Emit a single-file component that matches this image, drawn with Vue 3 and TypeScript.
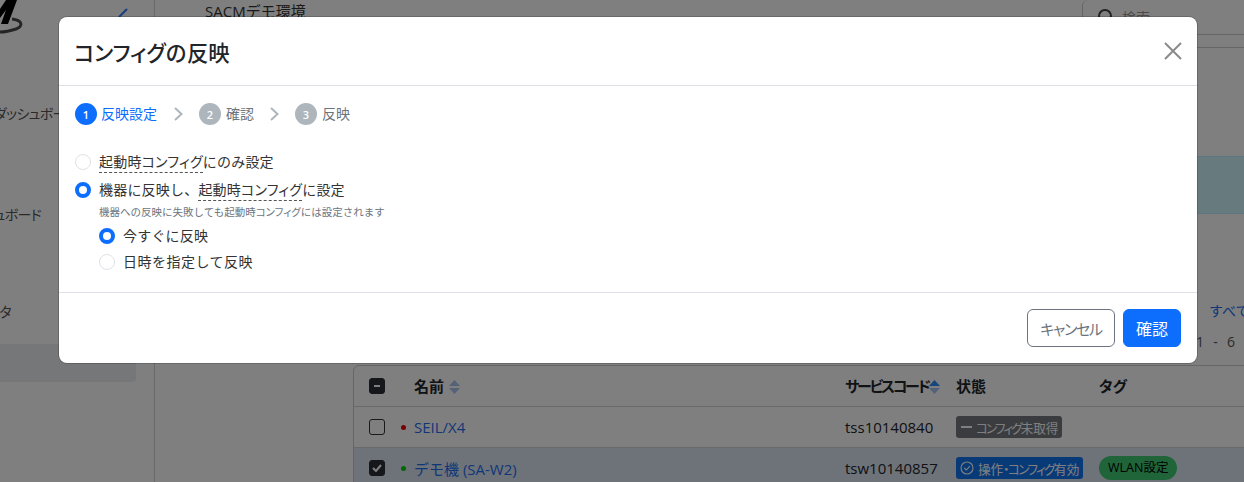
<script setup lang="ts">
import { ref } from 'vue'

const mode = ref('apply')
const timing = ref('now')
const steps = [
  { n: 1, label: '反映設定', active: true },
  { n: 2, label: '確認', active: false },
  { n: 3, label: '反映', active: false },
]
</script>

<template>
  <div class="page">
    <aside class="sidebar">
      <svg class="logo" width="154" height="47" viewBox="0 0 154 47">
        <path d="M12 19 C22 20 24 26 16 29 C10 31 4 32 0 32" fill="none" stroke="#4a4a4a" stroke-width="3" />
        <path d="M0 9 L6 0 H17 L8 24 H1 L6 10 L0 18 Z" fill="#000" />
        <path d="M127 9 L119 17" stroke="#2a7bff" stroke-width="2" fill="none" />
      </svg>
      <div class="nav nav-a">ダッシュボード</div>
      <div class="nav nav-b">ダッシュボード</div>
      <div class="nav nav-c">データ</div>
      <div class="nav-selected"></div>
    </aside>

    <main class="main">
      <header class="topbar">
        <span class="env">SACMデモ環境</span>
        <div class="search">
          <svg width="18" height="18" viewBox="0 0 18 18" fill="none" stroke="#444" stroke-width="2">
            <circle cx="8" cy="8" r="6" />
            <path d="M13 13 L17 17" />
          </svg>
          <span>検索</span>
        </div>
      </header>
      <div class="alert"></div>
      <a class="select-all">すべて選択</a>
      <div class="pager">1 - 6 / 6</div>
      <div class="table">
        <div class="row head">
          <span class="check dark"><i class="minus"></i></span>
          <span class="dot none"></span>
          <span class="c-name">名前
            <svg class="sort" width="11" height="14" viewBox="0 0 11 14">
              <path d="M5.5 0 L11 6 H0 Z" fill="#a9c4f0" />
              <path d="M5.5 14 L11 8 H0 Z" fill="#a9c4f0" />
            </svg>
          </span>
          <span class="c-code"><span class="tight">サービスコード</span>
            <svg class="sort" width="11" height="14" viewBox="0 0 11 14">
              <path d="M5.5 0 L11 6 H0 Z" fill="#2f8dff" />
              <path d="M5.5 14 L11 8 H0 Z" fill="#a9c4f0" />
            </svg>
          </span>
          <span class="c-state">状態</span>
          <span class="c-tag">タグ</span>
        </div>
        <div class="row">
          <span class="check"></span>
          <span class="dot red"></span>
          <a class="c-name link">SEIL/X4</a>
          <span class="c-code normal">tss10140840</span>
          <span class="c-state"><span class="badge gray"><i class="dash"></i><span><span class="tight">コンフィグ</span>未取得</span></span></span>
          <span class="c-tag"></span>
        </div>
        <div class="row selected">
          <span class="check dark">
            <svg width="10" height="8" viewBox="0 0 10 8" fill="none" stroke="#fff" stroke-width="2"><path d="M1 4 L4 7 L9 1" /></svg>
          </span>
          <span class="dot green"></span>
          <a class="c-name link">デモ機 (SA-W2)</a>
          <span class="c-code normal">tsw10140857</span>
          <span class="c-state">
            <span class="badge blue">
              <svg width="14" height="14" viewBox="0 0 14 14" fill="none" stroke="currentColor" stroke-width="1.1">
                <circle cx="7" cy="7" r="6" /><path d="M4.2 7 L6.3 9 L9.8 5.2" />
              </svg>
              <span>操作<span class="tight">・コンフィグ</span>有効</span>
            </span>
          </span>
          <span class="c-tag"><span class="pill">WLAN設定</span></span>
        </div>
      </div>
    </main>

    <div class="backdrop"></div>

    <section class="modal">
      <header class="modal-head">
        <h2><span class="kt">コンフィグ</span>の反映</h2>
        <svg class="close" width="18" height="18" viewBox="0 0 18 18" fill="none" stroke="#8a8a8a" stroke-width="2">
          <path d="M1 1 L17 17 M17 1 L1 17" />
        </svg>
      </header>

      <div class="modal-body">
        <ol class="steps">
          <template v-for="(s, i) in steps" :key="s.n">
            <li class="step" :class="{ active: s.active }">
              <span class="num">{{ s.n }}</span>
              <span class="step-label">{{ s.label }}</span>
            </li>
            <svg v-if="i < steps.length - 1" class="chev" width="9" height="14" viewBox="0 0 9 14" fill="none" stroke="#adb5bd" stroke-width="2">
              <path d="M1 1 L7.5 7 L1 13" />
            </svg>
          </template>
        </ol>

        <label class="radio r1">
          <input v-model="mode" type="radio" value="startup" />
          <span class="rtext"><span class="term kt">起動時コンフィグ</span>にのみ設定</span>
        </label>
        <label class="radio r2">
          <input v-model="mode" type="radio" value="apply" />
          <span class="rtext">機器に反映し、<span class="term kt">起動時コンフィグ</span>に設定</span>
        </label>
        <p class="hint">機器への反映に失敗しても起動時<span class="kt">コンフィグ</span>には設定されます</p>
        <div class="sub">
          <label class="radio">
            <input v-model="timing" type="radio" value="now" />
            <span class="rtext">今すぐに反映</span>
          </label>
          <label class="radio">
            <input v-model="timing" type="radio" value="later" />
            <span class="rtext wide">日時を指定して反映</span>
          </label>
        </div>
      </div>

      <footer class="modal-foot">
        <button class="btn cancel" type="button">キャンセル</button>
        <button class="btn ok" type="button">確認</button>
      </footer>
    </section>
  </div>
</template>

<style>
html, body { margin: 0; background: #fff; }
</style>

<style scoped>
.page {
  position: relative;
  display: flex;
  width: 1244px;
  height: 482px;
  overflow: hidden;
  background: #fff;
  color: #212529;
  font-family: "Open Sans", "Noto Sans CJK JP", sans-serif;
  font-size: 14px;
}
.kt { font-feature-settings: "palt"; }
.tight { font-feature-settings: "palt"; letter-spacing: -1.6px; }
.head .tight { letter-spacing: -2.2px; }
.sidebar {
  width: 154px;
  flex: none;
  border-right: 1px solid #d5d5d5;
  overflow: hidden;
  color: #555;
  font-feature-settings: "palt";
}
.logo { display: block; }
.nav { white-space: nowrap; line-height: 20px; letter-spacing: -0.7px; }
.nav-a { margin: 57px 0 0 -6px; }
.nav-b { margin: 81px 0 0 -41px; }
.nav-c { margin: 77px 0 0 -26px; }
.nav-selected {
  width: 136px;
  height: 38px;
  margin-top: 22px;
  background: #eceef3;
  border-radius: 0 4px 4px 0;
}
.main { flex: 1; min-width: 0; overflow: hidden; }
.topbar {
  display: flex;
  justify-content: space-between;
  height: 47px;
  box-sizing: content-box;
  border-bottom: 1px solid #ccc;
}
.env {
  margin: 1px 0 0 50px;
  font-size: 15px;
  line-height: 20px;
  color: #333;
}
.search {
  display: flex;
  align-items: center;
  gap: 7px;
  width: 162px;
  height: 35px;
  padding-left: 14px;
  border-left: 1px solid #ccc;
  border-bottom: 1px solid #ccc;
  border-radius: 6px 0 0 0;
  color: #999;
  box-sizing: border-box;
}
.alert {
  height: 56px;
  margin: 108px 0 0 0;
  background: #cff4fc;
  border-top: 1px solid #b6effb;
  border-bottom: 1px solid #b6effb;
  box-sizing: content-box;
}
.select-all {
  display: block;
  margin: 87px 0 0 1054px;
  color: #1f6fef;
  line-height: 20px;
  white-space: nowrap;
}
.pager {
  margin: 11px 0 0 1041px;
  color: #555;
  letter-spacing: 2.8px;
  line-height: 20px;
  white-space: nowrap;
}
.table {
  width: 1000px;
  margin: 13px 0 0 198px;
  border: 1px solid #ccc;
  border-radius: 6px 0 0 0;
}
.row {
  display: flex;
  align-items: center;
  height: 40px;
  border-bottom: 1px solid #d3d3d3;
  font-size: 15px;
}
.row.selected { background: #dce6f5; }
.head { font-weight: 700; }
.head .c-name, .head .c-code, .head .c-state, .head .c-tag { margin-top: -2px; }
.check {
  display: flex;
  align-items: center;
  justify-content: center;
  flex: none;
  width: 14px;
  height: 14px;
  margin-left: 15px;
  border: 1px solid #333;
  border-radius: 3px;
  box-sizing: content-box;
}
.check.dark { background: #2b2f36; border-color: #2b2f36; }
.minus { width: 6px; height: 2px; background: #fff; }
.dot {
  flex: none;
  width: 5px;
  height: 5px;
  margin: 0 8px 0 16px;
  border-radius: 50%;
}
.dot.none { background: none; }
.red { background: #f00000; }
.green { background: #00d000; }
.c-name { flex: none; width: 431px; white-space: nowrap; }
.c-code { flex: none; width: 111px; white-space: nowrap; }
.c-state { flex: none; width: 143px; font-weight: 700; }
.c-tag { flex: none; white-space: nowrap; font-feature-settings: "palt"; }
.row:not(.head) .c-state { font-weight: 400; }
.normal { font-weight: 400; }
.link { color: #1f6fef; }
.sort { vertical-align: -2px; }
.head .c-name .sort { margin-left: 1px; }
.badge {
  display: inline-flex;
  align-items: center;
  gap: 4px;
  height: 22px;
  padding: 0 4px;
  border-radius: 3px;
  font-size: 12.6px;
  color: #fff;
  white-space: nowrap;
  vertical-align: middle;
}
.gray { background: #74787e; }
.gray .tight { letter-spacing: -1.9px; }
.blue { background: #1275f0; }
.dash { width: 11px; height: 2px; margin-left: 1px; background: #fff; }
.pill {
  display: inline-block;
  height: 24px;
  padding: 0 9px;
  border-radius: 12px;
  background: #3ecb72;
  color: #000;
  font-size: 12.5px;
  line-height: 24px;
}
.backdrop {
  position: absolute;
  inset: 0;
  background: rgba(0, 0, 0, 0.5);
}
.modal {
  position: absolute;
  left: 59px;
  top: 17px;
  display: flex;
  flex-direction: column;
  width: 1138px;
  height: 346px;
  background: #fff;
  border-radius: 8px;
  box-shadow: 0 0 0 1px rgba(0, 0, 0, 0.18);
}
.modal-head {
  display: flex;
  align-items: center;
  justify-content: space-between;
  flex: none;
  height: 69px;
  padding: 0 15px;
  border-bottom: 1px solid #dee2e6;
  box-sizing: border-box;
}
h2 {
  margin: 0;
  font-size: 21.3px;
  font-weight: 500;
  color: #212529;
}
.modal-body { flex: 1; padding: 17px 16px 0; }
.steps {
  display: flex;
  align-items: center;
  margin: 0;
  padding: 0;
  list-style: none;
  height: 22px;
  color: #6c757d;
}
.step { display: flex; align-items: center; gap: 4px; }
.step:not(.active) { gap: 5px; margin-right: -1px; }
.step-label { margin-top: -2px; }
.step.active { color: #0d6efd; }
.num {
  display: flex;
  align-items: center;
  justify-content: center;
  width: 22px;
  height: 22px;
  border-radius: 50%;
  background: #adb5bd;
  color: #fff;
  font-size: 11px;
  font-weight: 600;
}
.active .num { background: #0d6efd; }
.chev { margin: 0 16px 0 17px; }
.radio {
  display: flex;
  align-items: center;
  gap: 8px;
  height: 26px;
  color: #333;
  white-space: nowrap;
}
.rtext { margin-top: -2px; letter-spacing: 0.2px; }
.wide { letter-spacing: 0.5px; }
.r1 { margin-top: 24px; }
.r2 { margin-top: 2px; }
input {
  appearance: none;
  flex: none;
  width: 16px;
  height: 16px;
  margin: 0;
  border: 1px solid #dee2e6;
  border-radius: 50%;
  background: #fff;
  box-sizing: border-box;
}
input:checked {
  border: 4px solid #0d6efd;
  background: #fff;
}
.term { padding-bottom: 1px; border-bottom: 1px dashed #555; }
.hint {
  margin: 0 0 0 24px;
  font-size: 10.5px;
  line-height: 18px;
  color: #6c757d;
}
.sub { margin: 2px 0 0 24px; }
.modal-foot {
  display: flex;
  justify-content: flex-end;
  gap: 8px;
  flex: none;
  height: 71px;
  padding: 16px 16px 0 0;
  border-top: 1px solid #dee2e6;
  box-sizing: border-box;
}
.btn {
  height: 38px;
  border-radius: 6px;
  border: 1px solid #6c757d;
  font: inherit;
  font-size: 15px;
  font-feature-settings: "palt";
}
.cancel { width: 88px; background: #fff; color: #6c757d; letter-spacing: -1.3px; }
.ok { width: 58px; background: #0d6efd; border-color: #0d6efd; color: #fff; font-size: 16px; }
</style>
